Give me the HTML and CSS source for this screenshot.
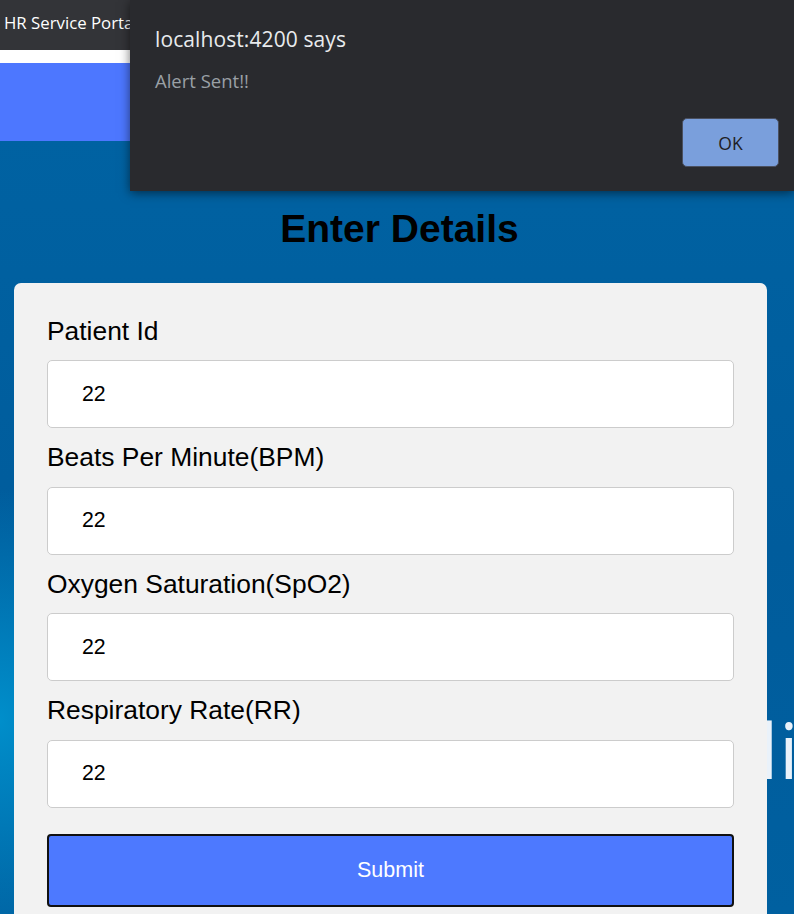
FILE: index.html
```html
<!DOCTYPE html>
<html lang="en">
<head>
<meta charset="utf-8">
<title>HR Service Portal</title>
<link rel="stylesheet" href="styles.css">
</head>
<body>
<div class="page">
  <header class="topbar"><span class="app-title">HR Service Portal</span></header>
  <div class="strip-white"></div>
  <div class="strip-blue"></div>
  <div class="wallpaper-text">li</div>
  <main class="content">
    <h1 class="title">Enter Details</h1>
    <form class="card">
      <label class="field-label" for="pid">Patient Id</label>
      <input class="field-input" id="pid" type="text" value="22">
      <label class="field-label" for="bpm">Beats Per Minute(BPM)</label>
      <input class="field-input" id="bpm" type="text" value="22">
      <label class="field-label" for="spo2">Oxygen Saturation(SpO2)</label>
      <input class="field-input" id="spo2" type="text" value="22">
      <label class="field-label" for="rr">Respiratory Rate(RR)</label>
      <input class="field-input" id="rr" type="text" value="22">
      <button class="submit" type="button">Submit</button>
    </form>
  </main>
  <div class="alert" role="alertdialog">
    <div class="alert-title">localhost:4200 says</div>
    <div class="alert-msg">Alert Sent!!</div>
    <div class="alert-actions"><button class="alert-ok" type="button">OK</button></div>
  </div>
</div>
</body>
</html>
```
FILE: styles.css
```css
html, body {
  margin: 0;
  padding: 0;
}
body {
  font-family: "Liberation Sans", Arial, sans-serif;
  overflow: hidden;
}
.page {
  position: relative;
  width: 794px;
  height: 914px;
  overflow: hidden;
  background-color: #005e9f;
  background-image:
    radial-gradient(ellipse 160px 230px at 0px 720px, rgba(0, 145, 205, 0.95), rgba(0, 140, 200, 0) 100%),
    linear-gradient(180deg, #0064a4 0%, #005c9c 60%, #0060a0 100%);
}
.topbar {
  height: 50px;
  box-sizing: border-box;
  background: #333438;
  display: flex;
  align-items: center;
  padding: 0 0 6px 4px;
}
.app-title {
  font-family: "Open Sans", "Noto Sans", sans-serif;
  font-size: 16.8px;
  color: #ffffff;
}
.strip-white {
  height: 13px;
  background: #ffffff;
}
.strip-blue {
  height: 78px;
  background: #4d77ff;
}
.wallpaper-text {
  position: absolute;
  left: 759px;
  top: 712px;
  font-family: "Open Sans", "Noto Sans", sans-serif;
  font-weight: 400;
  font-size: 76px;
  letter-spacing: 1px;
  line-height: 1;
  color: #eaf2fa;
}
.content {
  padding-top: 65px;
}
.title {
  margin: 0 0 32px 0;
  text-align: center;
  font-size: 39px;
  line-height: 45px;
  font-weight: bold;
  color: #000;
  padding-left: 5px;
}
.card {
  position: relative;
  margin-left: 14px;
  width: 753px;
  box-sizing: border-box;
  padding: 33.5px 33px 40px 33px;
  background: #f2f2f2;
  border-radius: 7px;
  display: flex;
  flex-direction: column;
}
.field-label {
  font-size: 26.4px;
  line-height: 29px;
  color: #000;
  margin-bottom: 14.5px;
}
.field-input {
  box-sizing: border-box;
  width: 100%;
  height: 68px;
  margin: 0 0 15px 0;
  padding: 0 34px;
  border: 1px solid #cccccc;
  border-radius: 5px;
  background: #ffffff;
  font-family: "Liberation Sans", Arial, sans-serif;
  font-size: 21.3px;
  color: #000;
  outline: none;
}
.submit {
  margin-top: 11px;
  width: 100%;
  height: 73px;
  box-sizing: border-box;
  background: #4d79ff;
  border: 2px solid #111111;
  border-radius: 4px;
  color: #ffffff;
  font-family: "Liberation Sans", Arial, sans-serif;
  font-size: 21.5px;
}
.alert {
  position: absolute;
  left: 130px;
  top: 0;
  right: 0;
  height: 191px;
  box-sizing: border-box;
  padding: 26px 15px 0 25px;
  background: #292a2e;
  box-shadow: 0 2px 10px rgba(0, 0, 0, 0.55);
  font-family: "Open Sans", "Noto Sans", sans-serif;
}
.alert-title {
  font-size: 21px;
  line-height: 26px;
  color: #e8eaed;
  letter-spacing: 0.1px;
}
.alert-msg {
  margin-top: 17px;
  font-size: 18.5px;
  line-height: 24px;
  color: #9aa0a6;
}
.alert-actions {
  margin-top: 25px;
  display: flex;
  justify-content: flex-end;
}
.alert-ok {
  width: 97px;
  height: 49px;
  box-sizing: border-box;
  background: #7a9fdc;
  border: 1px solid #4a5060;
  border-radius: 5px;
  color: #1f2125;
  font-family: "Open Sans", "Noto Sans", sans-serif;
  font-size: 17.5px;
}
```
